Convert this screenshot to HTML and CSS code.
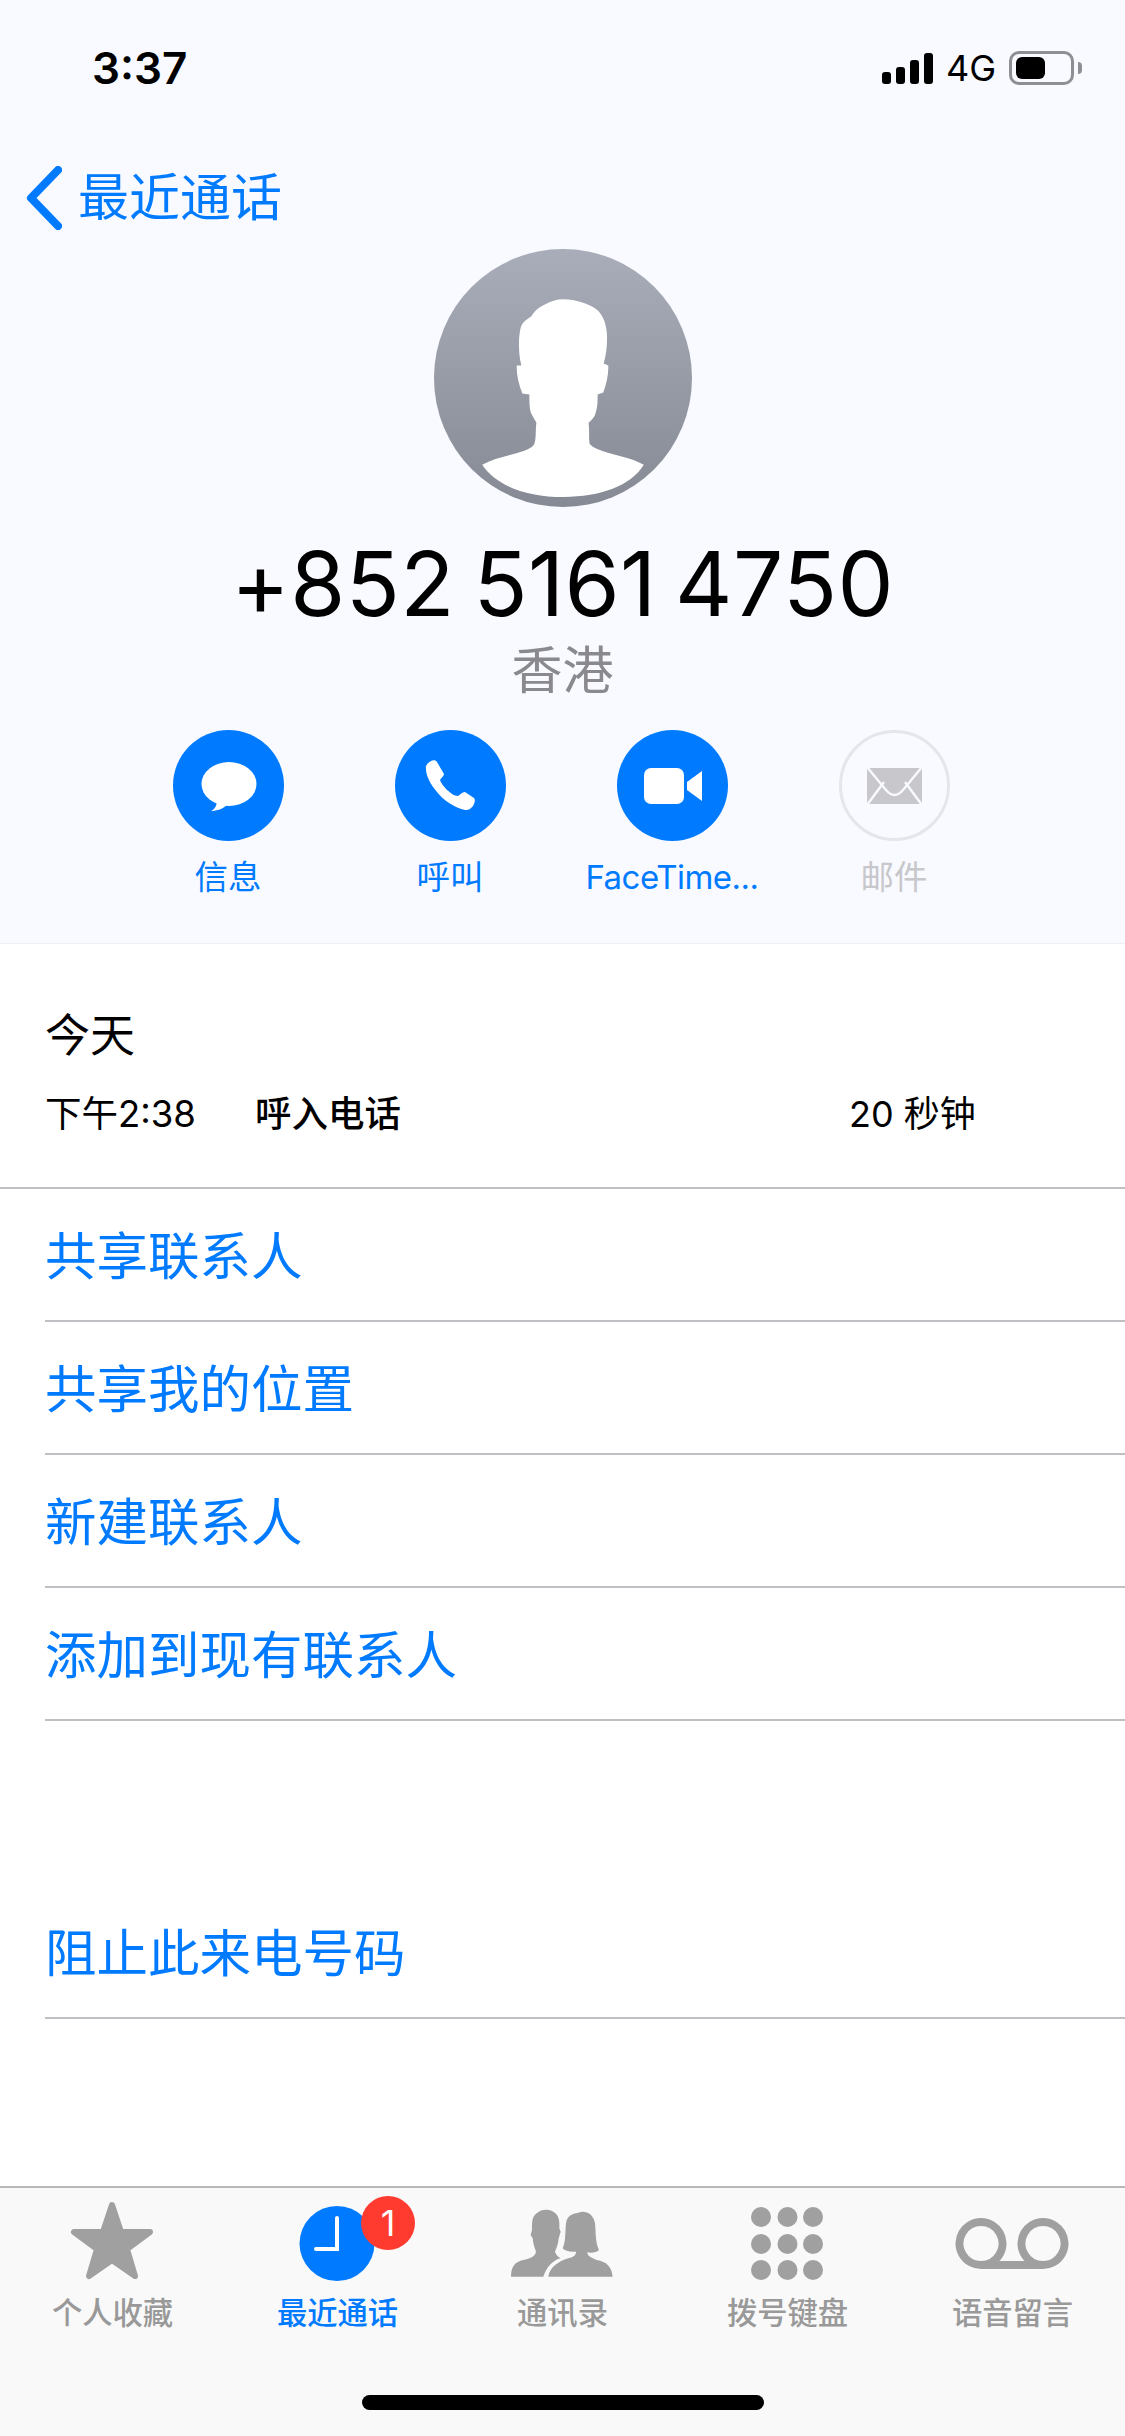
FILE: index.html
```html
<!DOCTYPE html>
<html lang="zh">
<head>
  <meta charset="UTF-8" />
  <meta name="viewport" content="width=device-width, initial-scale=1.0" />
  <title>最近通话</title>
  <link rel="stylesheet" href="styles.css">
</head>
<body>
<div class="page">

  <!-- header -->
  <header class="hero">
    <div class="status">
      <span class="time">3:37</span>
      <div class="status-right">
        <div class="signal"><i class="b1"></i><i class="b2"></i><i class="b3"></i><i class="b4"></i></div>
        <span class="net">4G</span>
        <div class="battery"><i></i></div>
        <div class="nub"></div>
      </div>
    </div>

    <a class="back">
      <svg class="chevron" width="36" height="64" viewBox="0 0 36 64"><path d="M32 4 L5 32 L32 60" fill="none" stroke="#007aff" stroke-width="8" stroke-linecap="round" stroke-linejoin="round"/></svg>
      <span>最近通话</span>
    </a>

    <svg class="avatar" width="258" height="258" viewBox="0 0 257 257">
      <defs>
        <linearGradient id="avatarBg" x1="0" y1="0" x2="0" y2="1">
          <stop offset="0" stop-color="#a9adb9"/>
          <stop offset="1" stop-color="#868a94"/>
        </linearGradient>
      </defs>
      <circle cx="128.5" cy="128.5" r="128.5" fill="url(#avatarBg)"/>
      <path fill="#fff" d="M129 50 C122 50 116 52 111 55 C104 58 100 62 97 67 C91 71 87 74 86 80 C84 90 84 104 87 116 L82.5 116 C82 124 84 134 88 144 L95 145 C95 152 95 160 97 164 C99 168 101 171 102 173 C101 180 102 188 100 194 C98 198 94 199 90 201 C76 206 60 208 48 215 C62 236 92 247 129 247 C166 247 196 236 209 215 C197 208 181 206 167 201 C163 199 158 198 155 194 C154 188 155 180 154 173 C157 170 160 168 161 163 C163 158 163 152 163 145 L168.6 143 C172 134 174 124 173.6 116 L169 114 C172 104 173 92 172 82 C171 73 168 66 163 61 C158 57 153 55 147 53 C141 51 135 50 129 50 Z"/>
    </svg>

    <div class="number">+852 5161 4750</div>
    <div class="region">香港</div>

    <div class="actions">
      <div class="action">
        <svg class="action-icon" width="111" height="111" viewBox="0 0 111 111">
          <circle cx="55.5" cy="55.5" r="55.5" fill="#007aff"/>
          <ellipse cx="56" cy="54" rx="27.5" ry="22" fill="#fff"/>
          <path fill="#fff" d="M44 70 C44 75 42 79 38 81 C44 81 50 79 55 74 Z"/>
        </svg>
        <span class="action-label">信息</span>
      </div>
      <div class="action">
        <svg class="action-icon" width="111" height="111" viewBox="0 0 111 111">
          <circle cx="55.5" cy="55.5" r="55.5" fill="#007aff"/>
          <path fill="#fff" d="M36 31 C38 30 41 30 42 32 L49 44 C49 46 46 48 45 50 C47 55 49 56 52 60 C56 63 59 66 63 66 C65 65 67 62 70 62 L79 68 C81 70 79 76 76 78 C74 80 72 80 70 80 C60 78 48 70 42 62 C35 54 30 44 31 36 C32 34 34 32 36 31 Z"/>
        </svg>
        <span class="action-label">呼叫</span>
      </div>
      <div class="action">
        <svg class="action-icon" width="111" height="111" viewBox="0 0 111 111">
          <circle cx="55.5" cy="55.5" r="55.5" fill="#007aff"/>
          <rect x="27" y="38" width="40" height="36" rx="7" fill="#fff"/>
          <path fill="#fff" d="M70 52 L85 41 L85 71 L70 60 Z"/>
        </svg>
        <span class="action-label latin">FaceTime...</span>
      </div>
      <div class="action off">
        <svg class="action-icon" width="111" height="111" viewBox="0 0 111 111">
          <circle cx="55.5" cy="55.5" r="54" fill="none" stroke="#e5e5ea" stroke-width="3"/>
          <rect x="28" y="38" width="55" height="36" fill="#c7c7cc"/>
          <path fill="none" stroke="#f8faff" stroke-width="2.4" d="M28 37 L47 60 Q55.5 70 64 60 L83 37 M28 75 L45 52 M83 75 L66 52"/>
        </svg>
        <span class="action-label">邮件</span>
      </div>
    </div>
  </header>

  <!-- call log -->
  <section class="recent">
    <div class="recent-day">今天</div>
    <div class="recent-row">
      <span class="recent-time">下午2:38</span>
      <span class="recent-type">呼入电话</span>
      <span class="recent-len">20 秒钟</span>
    </div>
  </section>

  <div class="links">
    <div class="link">共享联系人</div>
    <div class="link">共享我的位置</div>
    <div class="link">新建联系人</div>
    <div class="link">添加到现有联系人</div>
  </div>

  <div class="links links-block">
    <div class="link">阻止此来电号码</div>
  </div>

  <!-- tab bar -->
  <nav class="tabbar">
    <div class="tabs">
      <div class="tab">
        <svg width="225" height="108" viewBox="0 0 225 108"><polygon points="112,17 121,44 150,44 127,61 135,88 112,72 89,88 97,61 74,44 103,44" fill="#a0a0a0" stroke="#a0a0a0" stroke-width="6" stroke-linejoin="round"/></svg>
        <span class="tab-label">个人收藏</span>
      </div>
      <div class="tab active">
        <svg width="225" height="108" viewBox="0 0 225 108">
          <circle cx="112" cy="55.5" r="37.5" fill="#007aff"/>
          <path d="M112 30 V61 H91" fill="none" stroke="#fff" stroke-width="4" stroke-linecap="round"/>
        </svg>
        <span class="badge">1</span>
        <span class="tab-label">最近通话</span>
      </div>
      <div class="tab">
        <svg width="225" height="108" viewBox="0 0 225 108">
          <g transform="translate(50 7) scale(.3333)" fill="#a0a0a0">
            <path d="M33 245 C33 215 45 200 70 195 C90 190 105 185 108 170 C105 160 100 150 98 130 L92 120 L96 105 C96 85 95 65 110 55 C125 42 145 42 160 50 C175 58 180 75 178 100 L182 110 L176 130 C174 150 170 158 165 170 C168 180 175 185 182 190 C160 195 140 215 130 245 Z"/>
            <path d="M145 245 C150 215 175 200 205 190 C222 185 228 180 228 170 C210 172 195 168 188 160 C198 140 195 110 198 85 C200 65 215 55 235 53 C255 45 280 55 285 85 C288 110 285 140 297 165 C290 172 275 175 262 172 C262 182 270 187 290 195 C320 200 335 215 338 245 Z"/>
          </g>
        </svg>
        <span class="tab-label">通讯录</span>
      </div>
      <div class="tab">
        <svg width="225" height="108" viewBox="0 0 225 108" fill="#a0a0a0">
          <circle cx="86" cy="29" r="10"/><circle cx="112.500" cy="29" r="10"/><circle cx="138" cy="29" r="10"/>
          <circle cx="86" cy="56" r="10"/><circle cx="112.500" cy="56" r="10"/><circle cx="138" cy="56" r="10"/>
          <circle cx="86" cy="82" r="10"/><circle cx="112.500" cy="82" r="10"/><circle cx="138" cy="82" r="10"/>
        </svg>
        <span class="tab-label">拨号键盘</span>
      </div>
      <div class="tab">
        <svg width="225" height="108" viewBox="0 0 225 108">
          <path d="M81 77 H143 M81 77 A21.500 21.500 0 1 1 81.010 77 M143 77 A21.500 21.500 0 1 0 142.990 77" fill="none" stroke="#a0a0a0" stroke-width="8"/>
        </svg>
        <span class="tab-label">语音留言</span>
      </div>
    </div>
    <div class="home-bar"></div>
  </nav>
</div>
</body>
</html>
```

FILE: styles.css
```css
/* ===== reset & base ===== */
*,*::before,*::after{box-sizing:border-box;margin:0;padding:0;}
body{font-family:Inter,"Noto Sans CJK SC",sans-serif;background:#fff;color:#000;}
.page{width:1125px;height:2436px;display:flex;flex-direction:column;overflow:hidden;}

/* ===== header ===== */
.hero{height:944px;background:#f8faff;border-bottom:1px solid #eeeff3;display:flex;flex-direction:column;}
.status{height:136px;flex:none;display:flex;align-items:center;justify-content:space-between;padding:0 43px 0 92px;}
.time{font-size:44px;font-weight:600;}
.status-right{display:flex;align-items:center;}
.signal{display:flex;align-items:flex-end;gap:5px;height:31px;margin-right:13px;}
.signal i{display:block;width:9px;border-radius:3px;background:#000;}
.signal .b1{height:12px;}
.signal .b2{height:17px;}
.signal .b3{height:24px;}
.signal .b4{height:31px;}
.net{font-size:36px;line-height:1;margin-right:13px;}
.battery{width:65px;height:34px;border:3px solid #8e8e93;border-radius:10px;padding:3px 4px;}
.battery i{display:block;width:29px;height:22px;background:#000;border-radius:6px;}
.nub{width:4px;height:12px;margin-left:4px;background:#8e8e93;border-radius:0 4px 4px 0;}

.back{height:113px;flex:none;display:flex;align-items:center;gap:16px;padding:11px 0 0 26px;color:#007aff;font-size:51px;}
.back span{padding-bottom:8px;}
.chevron{flex:none;}
.avatar{display:block;flex:none;align-self:center;}
.number{font-size:89px;line-height:100px;margin-top:27px;text-align:center;word-spacing:-7px;letter-spacing:.4px;}
.region{font-size:51px;line-height:60px;margin-top:7px;text-align:center;color:#8a8a8e;}

.actions{display:flex;justify-content:center;margin-top:29px;padding-right:3px;}
.action{width:222px;display:flex;flex-direction:column;align-items:center;color:#007aff;}
.action.off{color:#c7c7cc;}
.action-icon{display:block;}
.action-label{font-size:33.5px;line-height:40px;margin-top:16px;}
.action-label.latin{font-size:33px;letter-spacing:-.5px;}

/* ===== call log ===== */
.recent{height:245px;flex:none;padding:69px 0 0 45px;border-bottom:2px solid #c0c0c4;}
.recent-day{font-size:45px;line-height:46px;}
.recent-row{display:flex;align-items:center;font-size:36px;line-height:44px;margin-top:33px;}
.recent-time{width:210px;font-size:36.5px;}
.recent-type{width:594px;font-weight:500;font-size:36.5px;}

/* ===== link rows ===== */
.links{padding-left:45px;flex:none;}
.links-block{margin-top:165px;}
.link{height:133px;display:flex;align-items:center;border-bottom:2px solid #c0c0c4;font-size:51.5px;color:#007aff;padding-bottom:4px;}

/* ===== tab bar ===== */
.tabbar{margin-top:auto;height:250px;flex:none;background:#f9f9f9;border-top:2px solid #b8b8b8;display:flex;flex-direction:column;}
.tabs{display:flex;}
.tab{position:relative;width:225px;display:flex;flex-direction:column;align-items:center;color:#999;}
.tab svg{display:block;}
.tab.active{color:#007aff;}
.tab-label{font-size:30.3px;line-height:36px;font-weight:500;margin-top:-1px;}
.badge{position:absolute;left:136px;top:8px;width:54px;height:54px;border-radius:50%;background:#ff3b30;color:#fff;font-size:36px;display:flex;align-items:center;justify-content:center;}
.home-bar{width:402px;height:15px;border-radius:8px;background:#000;align-self:center;margin-top:64px;}
```
